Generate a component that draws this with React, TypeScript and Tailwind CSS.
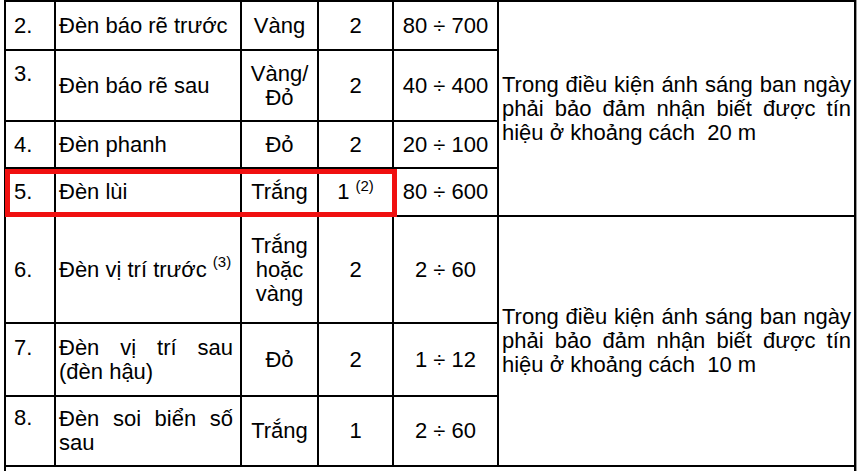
import React from "react";

const cell = "bg-white flex items-center";

export default function App() {
  return (
    <div
      className="relative w-[860px] h-[471px] overflow-hidden bg-white text-black text-[22px] leading-[24px]"
      style={{ fontFamily: '"Liberation Sans", Arial, sans-serif' }}
    >
      <div className="ml-[4px] w-[852px] grid grid-cols-[48px_184px_75px_73px_103px_355px] grid-rows-[47px_69px_45px_46px_105px_71px_68px_40px] gap-[2px] p-[2px] bg-black shadow-[1px_0_0_#9a9a9a]">
        {/* Row 2 */}
        <div className={`${cell} pl-[8px]`}>2.</div>
        <div className={`${cell} pl-[3px]`}>Đèn báo rẽ trước</div>
        <div className={`${cell} justify-center`}>Vàng</div>
        <div className={`${cell} justify-center`}>2</div>
        <div className={`${cell} justify-center`}>80 ÷ 700</div>
        <div className={`${cell} row-span-4 px-[3px]`}>
          <p className="text-justify w-full">
            Trong điều kiện ánh sáng ban ngày phải bảo đảm nhận biết được tín hiệu ở khoảng cách&nbsp; 20 m
          </p>
        </div>

        {/* Row 3 */}
        <div className="bg-white pl-[8px] pt-[11px]">3.</div>
        <div className={`${cell} pl-[3px]`}>Đèn báo rẽ sau</div>
        <div className={`${cell} justify-center text-center`}>
          <span>
            Vàng/
            <br />
            Đỏ
          </span>
        </div>
        <div className={`${cell} justify-center`}>2</div>
        <div className={`${cell} justify-center`}>40 ÷ 400</div>

        {/* Row 4 */}
        <div className={`${cell} pl-[8px]`}>4.</div>
        <div className={`${cell} pl-[3px]`}>Đèn phanh</div>
        <div className={`${cell} justify-center`}>Đỏ</div>
        <div className={`${cell} justify-center`}>2</div>
        <div className={`${cell} justify-center`}>20 ÷ 100</div>

        {/* Row 5 */}
        <div className={`${cell} pl-[8px]`}>5.</div>
        <div className={`${cell} pl-[3px]`}>Đèn lùi</div>
        <div className={`${cell} justify-center`}>Trắng</div>
        <div className={`${cell} justify-center`}>
          <span>
            1 <sup className="text-[15px] top-[-8px]">(2)</sup>
          </span>
        </div>
        <div className={`${cell} justify-center`}>80 ÷ 600</div>

        {/* Row 6 */}
        <div className={`${cell} pl-[8px]`}>6.</div>
        <div className={`${cell} pl-[3px]`}>
          <span>
            Đèn vị trí trước <sup className="text-[15px] top-[-10px]">(3)</sup>
          </span>
        </div>
        <div className={`${cell} justify-center text-center`}>
          <span>
            Trắng
            <br />
            hoặc
            <br />
            vàng
          </span>
        </div>
        <div className={`${cell} justify-center`}>2</div>
        <div className={`${cell} justify-center`}>2 ÷ 60</div>
        <div className={`${cell} row-span-3 px-[3px]`}>
          <p className="text-justify w-full">
            Trong điều kiện ánh sáng ban ngày phải bảo đảm nhận biết được tín hiệu ở khoảng cách&nbsp; 10 m
          </p>
        </div>

        {/* Row 7 */}
        <div className="bg-white pl-[8px] pt-[12px]">7.</div>
        <div className={`${cell} pl-[3px] pr-[7px]`}>
          <div className="w-full">
            <p className="text-justify [text-align-last:justify]">Đèn vị trí sau</p>
            <p>(đèn hậu)</p>
          </div>
        </div>
        <div className={`${cell} justify-center`}>Đỏ</div>
        <div className={`${cell} justify-center`}>2</div>
        <div className={`${cell} justify-center`}>1 ÷ 12</div>

        {/* Row 8 */}
        <div className="bg-white pl-[8px] pt-[9px]">8.</div>
        <div className={`${cell} pl-[3px] pr-[7px]`}>
          <div className="w-full">
            <p className="text-justify [text-align-last:justify]">Đèn soi biển số</p>
            <p>sau</p>
          </div>
        </div>
        <div className={`${cell} justify-center`}>Trắng</div>
        <div className={`${cell} justify-center`}>1</div>
        <div className={`${cell} justify-center`}>2 ÷ 60</div>

        {/* Row 9 */}
        <div className="bg-white col-span-6" />
      </div>

      {/* Highlight box */}
      <div className="absolute left-[5px] top-[169px] w-[392px] h-[48px] border-[5px] border-[#f01010]" />
    </div>
  );
}
